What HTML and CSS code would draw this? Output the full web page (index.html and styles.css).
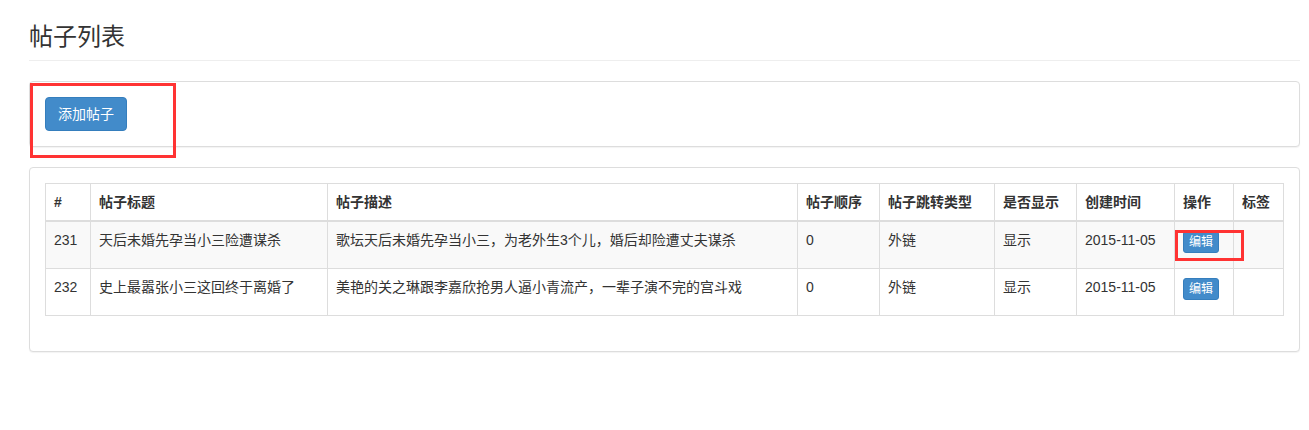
FILE: index.html
```html
<!DOCTYPE html>
<html lang="zh-CN">
<head>
    <meta charset="UTF-8">
    <meta name="viewport" content="width=device-width, initial-scale=1.0">
    <title>帖子列表</title>
    <link rel="stylesheet" href="styles.css">
</head>
<body>

    <div class="container">
        <div class="page-header">
            <h3>帖子列表</h3>
        </div>

        <div class="panel toolbar">
            <button type="button" class="btn btn-primary">添加帖子</button>
            <span class="mark mark-add"></span>
        </div>

        <div class="panel">
            <table class="data-table">
                <colgroup>
                    <col style="width: 45px">
                    <col style="width: 237px">
                    <col style="width: 470px">
                    <col style="width: 82px">
                    <col style="width: 115px">
                    <col style="width: 82px">
                    <col style="width: 98px">
                    <col style="width: 59px">
                    <col>
                </colgroup>
                <thead>
                    <tr>
                        <th>#</th>
                        <th>帖子标题</th>
                        <th>帖子描述</th>
                        <th>帖子顺序</th>
                        <th>帖子跳转类型</th>
                        <th>是否显示</th>
                        <th>创建时间</th>
                        <th>操作</th>
                        <th>标签</th>
                    </tr>
                </thead>
                <tbody>
                    <tr>
                        <td>231</td>
                        <td>天后未婚先孕当小三险遭谋杀</td>
                        <td>歌坛天后未婚先孕当小三，为老外生3个儿，婚后却险遭丈夫谋杀</td>
                        <td>0</td>
                        <td>外链</td>
                        <td>显示</td>
                        <td>2015-11-05</td>
                        <td class="op-cell">
                            <button type="button" class="btn btn-primary btn-xs">编辑</button>
                            <span class="mark mark-edit"></span>
                        </td>
                        <td></td>
                    </tr>
                    <tr>
                        <td>232</td>
                        <td>史上最嚣张小三这回终于离婚了</td>
                        <td>美艳的关之琳跟李嘉欣抢男人逼小青流产，一辈子演不完的宫斗戏</td>
                        <td>0</td>
                        <td>外链</td>
                        <td>显示</td>
                        <td>2015-11-05</td>
                        <td class="op-cell">
                            <button type="button" class="btn btn-primary btn-xs">编辑</button>
                        </td>
                        <td></td>
                    </tr>
                </tbody>
            </table>
        </div>
    </div>

</body>
</html>
```

FILE: styles.css
```css
* {
    box-sizing: border-box;
}
body {
    margin: 0;
    font-family: "Liberation Sans", Arial, "Noto Sans CJK SC", sans-serif;
    font-size: 14px;
    line-height: 20px;
    color: #333;
    background: #fff;
}
.container {
    padding: 0 9px 0 29px;
}
.page-header {
    margin: 23px 0 20px;
    padding-bottom: 9px;
    border-bottom: 1px solid #eee;
}
.page-header h3 {
    margin: 0;
    font-size: 24px;
    font-weight: normal;
    line-height: 28px;
    color: #333;
}
.panel {
    position: relative;
    margin-bottom: 20px;
    padding: 15px;
    border: 1px solid #ddd;
    border-radius: 4px;
    background: #fff;
    box-shadow: 0 1px 1px rgba(0, 0, 0, 0.05);
}
.btn {
    display: inline-block;
    padding: 6px 12px;
    font-family: inherit;
    font-size: 14px;
    line-height: 20px;
    border: 1px solid transparent;
    border-radius: 4px;
    cursor: pointer;
    vertical-align: middle;
}
.btn-primary {
    color: #fff;
    background-color: #428bca;
    border-color: #357ebd;
}
.btn-xs {
    padding: 1px 5px;
    font-size: 12px;
    line-height: 18px;
    border-radius: 3px;
    vertical-align: top;
    margin-top: 1px;
}
.data-table {
    width: 100%;
    table-layout: fixed;
    border-collapse: collapse;
    margin-bottom: 20px;
    border: 1px solid #ddd;
}
.data-table th,
.data-table td {
    padding: 8px;
    text-align: left;
    vertical-align: top;
    border: 1px solid #ddd;
    white-space: nowrap;
}
.data-table thead th {
    font-weight: bold;
    border-bottom: 2px solid #ddd;
}
.data-table tbody td {
    height: 47px;
}
.data-table tbody tr:nth-child(odd) {
    background-color: #f9f9f9;
}
.op-cell {
    position: relative;
}
.mark {
    position: absolute;
    border: 3px solid #f33;
    pointer-events: none;
}
.mark-add {
    left: 0;
    top: 1px;
    width: 146px;
    height: 75px;
}
.mark-edit {
    left: 0;
    top: 8px;
    width: 69px;
    height: 31px;
}
```
